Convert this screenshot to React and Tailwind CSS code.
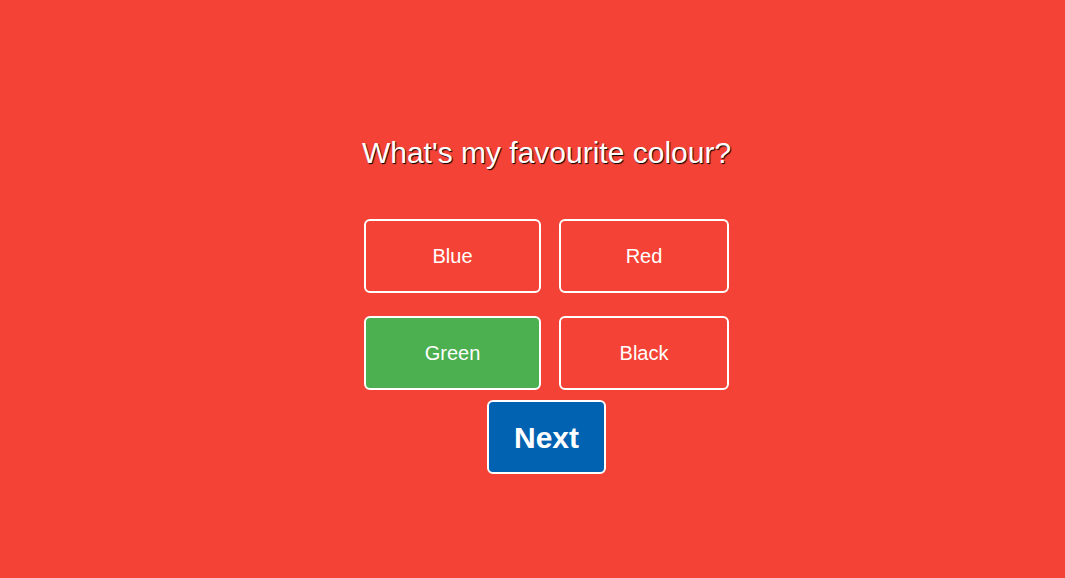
export default function App() {
  const btn =
    "h-[74px] rounded-[6px] border-2 border-white text-white text-[20px] flex items-center justify-center";
  return (
    <div
      className="w-full h-[578px] bg-[#f44336] flex flex-col items-center pl-[28px] pt-[136px]"
      style={{ fontFamily: '"Liberation Sans", Arial, sans-serif' }}
    >
      <h1 className="text-[30px] leading-[34px] text-white [text-shadow:1px_1px_1px_#000]">
        What's my favourite colour?
      </h1>
      <div className="mt-[49px] grid grid-cols-[177px_170px] gap-x-[18px] gap-y-[23px]">
        <button className={btn}>Blue</button>
        <button className={btn}>Red</button>
        <button className={btn + " bg-[#4caf50]"}>Green</button>
        <button className={btn}>Black</button>
      </div>
      <button className="mt-[10px] w-[119px] h-[74px] rounded-[6px] border-2 border-white bg-[#0062b1] text-white text-[30px] font-bold flex items-center justify-center">
        Next
      </button>
    </div>
  );
}
